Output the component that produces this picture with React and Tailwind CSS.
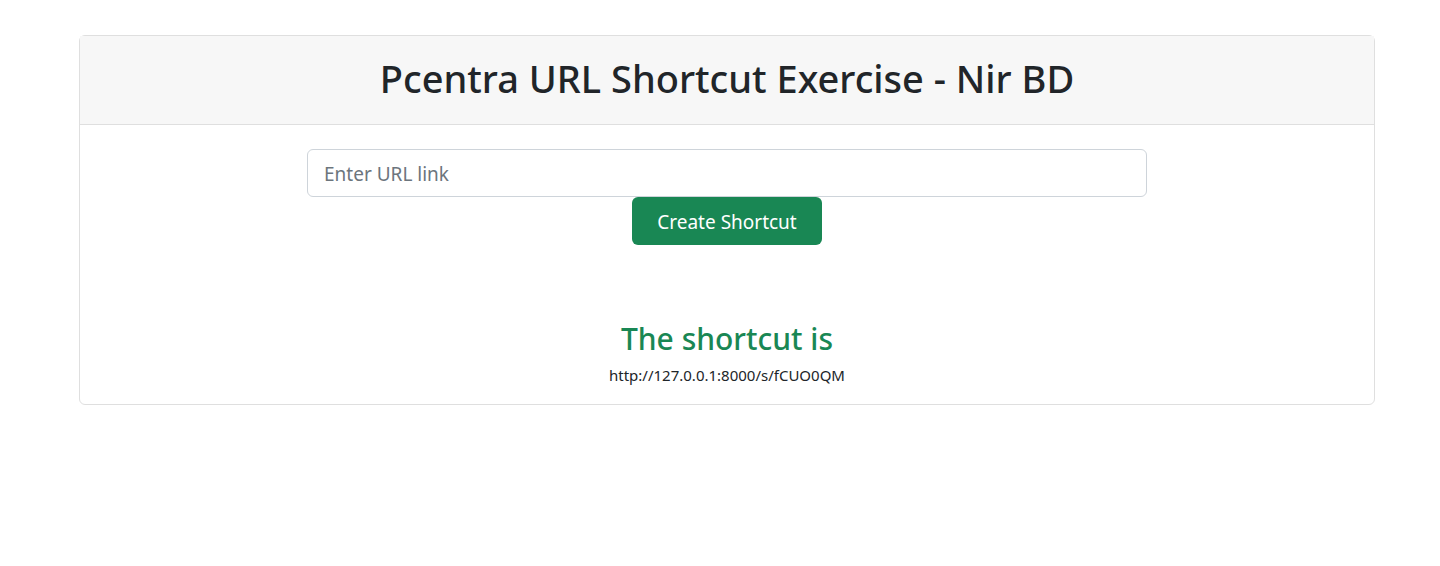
export default function App() {
  return (
    <div className="min-h-[566px] bg-white font-['Noto_Sans',sans-serif] text-[#212529]">
      <div className="pt-[35px] pl-[79px]">
        <div className="w-[1296px] rounded-[6px] border border-[#dfdfdf]">
          {/* Header */}
          <div className="border-b border-[#dfdfdf] bg-[#f7f7f7] pt-[18px] pb-[22px] text-center">
            <h1 className="text-[38px] leading-[48px] font-medium">
              Pcentra URL Shortcut Exercise - Nir BD
            </h1>
          </div>

          {/* Body */}
          <div className="flex flex-col items-center pt-[24px] pb-[18px]">
            <input
              type="text"
              placeholder="Enter URL link"
              className="h-[48px] w-[840px] rounded-[6px] border border-[#ced4da] px-[16px] pt-[2px] text-[19px] text-[#212529] placeholder:text-[#6c757d] outline-none"
            />
            <button className="h-[48px] w-[190px] rounded-[6px] bg-[#198754] pt-[2px] text-[19px] text-white">
              Create Shortcut
            </button>

            <h2 className="mt-[75px] text-[30px] leading-[38px] font-medium text-[#198754]">
              The shortcut is
            </h2>
            <p className="mt-[7px] text-[15px] leading-[21px]">
              http://127.0.0.1:8000/s/fCUO0QM
            </p>
          </div>
        </div>
      </div>
    </div>
  )
}
